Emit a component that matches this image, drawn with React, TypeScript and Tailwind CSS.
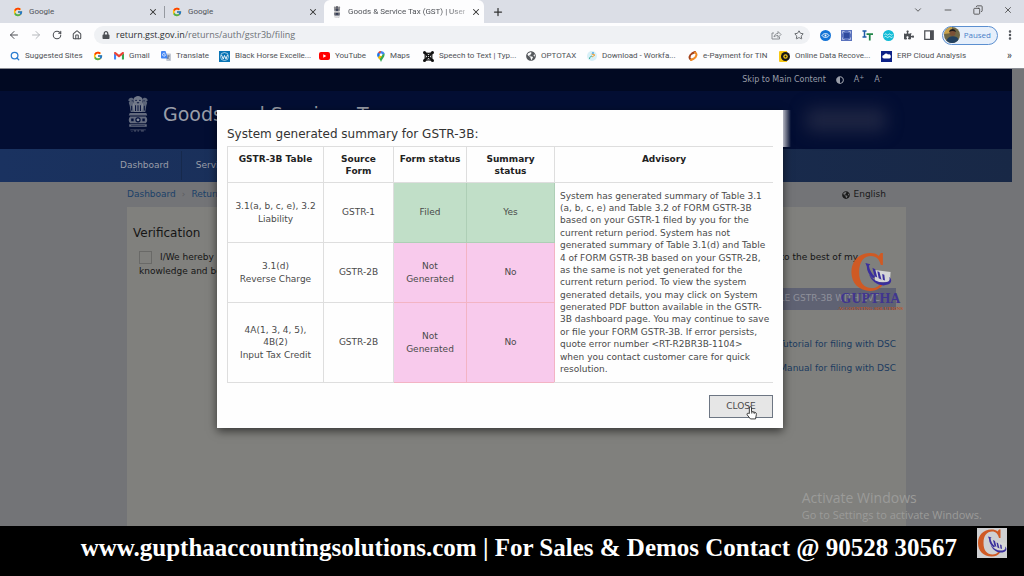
import React from "react";
import {
  ArrowLeft,
  ArrowRight,
  ChevronDown,
  Copy,
  EllipsisVertical,
  House,
  Minus,
  Plus,
  RotateCw,
  Search,
  Star,
  X,
} from "lucide-react";
import { FcGoogle } from "react-icons/fc";
import { FaAdjust, FaGlobeAmericas, FaLock, FaPuzzlePiece } from "react-icons/fa";

const rows = [
  {
    table: ["3.1(a, b, c, e), 3.2", "Liability"],
    source: "GSTR-1",
    form: "Filed",
    summary: "Yes",
    ok: true,
    height: "h-[60px]",
  },
  {
    table: ["3.1(d)", "Reverse Charge"],
    source: "GSTR-2B",
    form: "Not Generated",
    summary: "No",
    ok: false,
    height: "h-[60px]",
  },
  {
    table: ["4A(1, 3, 4, 5),", "4B(2)", "Input Tax Credit"],
    source: "GSTR-2B",
    form: "Not Generated",
    summary: "No",
    ok: false,
    height: "h-[80px]",
  },
];

function GmailIcon() {
  return (
    <svg viewBox="0 0 24 18" className="w-2.5 shrink-0">
      <path d="M0 3v13.500c0 .8.700 1.500 1.500 1.500H5V7z" fill="#4285f4" />
      <path d="M24 3v13.500c0 .8-.7 1.500-1.500 1.500H19V7z" fill="#34a853" />
      <path d="M0 2.500C0 0 2.500-.8 4.500.8L12 6.500 19.500.8C21.500-.8 24 0 24 2.500L23 5 12 13 1 5z" fill="#ea4335" />
    </svg>
  );
}

function TranslateIcon() {
  return (
    <svg viewBox="0 0 20 20" className="w-2.5 shrink-0">
      <path d="M8 5h10.500c.8 0 1.500.7 1.500 1.500V18c0 1-.6 2-1.500 2H11z" fill="#c3c9d4" />
      <path d="M1.500 0H9l5 15H1.500C.7 15 0 14.300 0 13.500v-12C0 .7.700 0 1.500 0z" fill="#4285f4" />
      <path d="M9 7.500H6.500M8.500 5.600A3 3 0 1 0 9 8" stroke="#fff" strokeWidth="1.400" fill="none" />
      <path d="M12 10h6M15 8.500V10c0 3-1.500 5-3 6M13 12l4 5" stroke="#5f6b80" strokeWidth="1.200" fill="none" />
    </svg>
  );
}

function WordpressIcon() {
  return (
    <svg viewBox="0 0 22 22" className="w-[11px] shrink-0">
      <path d="M0 0h22v22H0z" fill="#0b75b5" />
      <circle cx="11" cy="11" r="8" fill="none" stroke="#fff" strokeWidth="1.200" />
      <path d="M5 8l3.500 8L11 9l3 7 3-8" fill="none" stroke="#fff" strokeWidth="1.800" />
    </svg>
  );
}

function YoutubeIcon() {
  return (
    <svg viewBox="0 0 22 16" className="w-[11px] shrink-0">
      <rect width="22" height="16" rx="4" fill="#f00" />
      <path d="M8.500 4.500v7l6-3.500z" fill="#fff" />
    </svg>
  );
}

function MapsIcon() {
  return (
    <svg viewBox="0 0 16 22" className="h-[11px] shrink-0">
      <path d="M8 0a8 8 0 0 0-6 2.800L8 8z" fill="#ea4335" />
      <path d="M8 0a8 8 0 0 1 7.500 5L9 9 6 6z" fill="#4285f4" />
      <path d="M2 2.800C-.6 6-.3 10 2 13l6-6z" fill="#1a73e8" />
      <path d="M2 13L14.800 5C17 11 10 15 8 22c-1-4-3.500-6-6-9z" fill="#34a853" />
      <path d="M2 13l5-6 3 3-5 7z" fill="#fbbc04" />
      <circle cx="8" cy="7.500" r="2.700" fill="#fff" />
    </svg>
  );
}

function KnotIcon() {
  return (
    <svg viewBox="0 0 22 22" className="w-[11px] shrink-0">
      <g fill="none" stroke="#111">
        <path d="M3 3l16 16M19 3L3 19" strokeWidth="4" />
        <path d="M3 3c3 2 13 2 16 0-2 3-2 13 0 16-3-2-13-2-16 0 2-3 2-13 0-16z" strokeWidth="2.500" />
      </g>
      <circle cx="11" cy="11" r="1" fill="#fff" />
      <g fill="#111">
        <circle cx="3" cy="3" r="3" />
        <circle cx="19" cy="3" r="3" />
        <circle cx="3" cy="19" r="3" />
        <circle cx="19" cy="19" r="3" />
      </g>
    </svg>
  );
}

function WorkfaIcon() {
  return (
    <svg viewBox="0 0 20 20" className="w-2.5 shrink-0">
      <circle cx="10" cy="10" r="10" fill="#d8f0f7" />
      <path d="M5 16c0-4 2-5 5-6" stroke="#3fae9a" strokeWidth="2" fill="none" />
      <path d="M9 6l7 2-6 4" stroke="#f0a23a" strokeWidth="2" fill="none" />
      <circle cx="12" cy="4" r="1.800" fill="#4aa3df" />
    </svg>
  );
}

function TinIcon() {
  return (
    <svg viewBox="0 0 20 20" className="w-2.5 shrink-0">
      <path d="M6 17C1 15 3 8 8 5l6-3" fill="none" stroke="#a4441c" strokeWidth="4" strokeLinecap="round" />
      <path d="M14 3c5 2 3 9-2 12l-6 3" fill="none" stroke="#f08a24" strokeWidth="4" strokeLinecap="round" />
    </svg>
  );
}

function DiscIcon() {
  return (
    <svg viewBox="0 0 22 22" className="w-[11px] shrink-0">
      <path d="M2 0h14v22H2a2 2 0 0 1-2-2V2a2 2 0 0 1 2-2z" fill="#f7c815" />
      <circle cx="13" cy="11" r="9" fill="#161616" />
      <circle cx="13" cy="11" r="4.500" fill="#f7c815" />
      <circle cx="13" cy="11" r="2" fill="#161616" />
    </svg>
  );
}

function CloudIcon() {
  return (
    <svg viewBox="0 0 22 22" className="w-[11px] shrink-0">
      <path d="M0 0h22v22H0z" fill="#0d2187" />
      <path d="M6 15a3.500 3.500 0 0 1 0-7 4.500 4.500 0 0 1 8-1 4 4 0 0 1 3 8z" fill="#fff" />
    </svg>
  );
}

const bookmarks = [
  { label: "Suggested Sites", icon: <Search className="size-2.5 text-[#2b7cd0]" strokeWidth={3} />, width: "w-[83px]" },
  { label: "", icon: <FcGoogle className="size-2.5" />, width: "w-[21px]" },
  { label: "Gmail", icon: <GmailIcon />, width: "w-[47px]" },
  { label: "Translate", icon: <TranslateIcon />, width: "w-[58px]" },
  { label: "Black Horse Excelle...", icon: <WordpressIcon />, width: "w-[100px]" },
  { label: "YouTube", icon: <YoutubeIcon />, width: "w-[58px]" },
  { label: "Maps", icon: <MapsIcon />, width: "w-[46px]" },
  { label: "Speech to Text | Typ...", icon: <KnotIcon />, width: "w-[103px]" },
  { label: "OPTOTAX", icon: <FaGlobeAmericas className="size-2.5 text-[#55585c]" />, width: "w-[61px]" },
  { label: "Download - Workfa...", icon: <WorkfaIcon />, width: "w-[101px]" },
  { label: "e-Payment for TIN", icon: <TinIcon />, width: "w-[91px]" },
  { label: "Online Data Recove...", icon: <DiscIcon />, width: "w-[102px]" },
  { label: "ERP Cloud Analysis", icon: <CloudIcon />, width: "w-[90px]" },
];

function Emblem({ className }: { className: string }) {
  return (
    <svg viewBox="0 0 44 74" className={className} fill="currentColor">
      <path d="M16 2c4-2.500 8-2.500 12 0 3 2 4 5 3 9l2 9-3 13H14l-3-13 2-9c-1-4 0-7 3-9z" opacity=".85" />
      <path d="M3 6c4-4 9-2 10 1l-1 6 3 8-1 12H7L5 20 3 14l2-3-3-1zM41 6c-4-4-9-2-10 1l1 6-3 8 1 12h7l2-13 2-6-2-3 3-1z" opacity=".7" />
      <path d="M5 35h34l2 5H3zM6 42h32c4 4 4 10 0 14H6c-4-4-4-10 0-14zM4 58h36v5H4z" opacity=".75" />
      <g fill="#04103a">
        <circle cx="18" cy="9" r="1.500" />
        <circle cx="26" cy="9" r="1.500" />
        <path d="M19 13h6l-3 3zM16 19h2v12h-2zM21 19h2v12h-2zM26 19h2v12h-2zM9 9h3v2H9zM33 9h3v2h-3zM8 20h2v10H8zM34 20h2v10h-2z" />
        <circle cx="22" cy="49" r="5.500" />
        <path d="M8 46h5v6H8zM31 46h5v6h-5zM8 60h28v1H8z" />
      </g>
      <circle cx="22" cy="49" r="3" />
      <path d="M6 69h32v1.500H6zM8 72h3v1H8zM14 71h4v2h-4zM21 71h3v2h-3zM28 71h6v2h-6z" opacity=".6" />
    </svg>
  );
}

// Serif-style C ring with falling bars and a swoosh inside
function GupthaMark({ className }: { className: string }) {
  return (
    <svg viewBox="0 0 60 60" className={className}>
      <path
        d="M44 20h3V3h-3l-3 4C38 4 34 3 29 3 13 3 2 14 2 30s11 27 27 27c8 0 14-3 18-9l-3-2c-3 5-8 7-13 7-11 0-18-8-18-23S20 7 30 7c8 0 12 5 14 13z"
        className="fill-[#cf5a24]"
      />
      <path d="M35 27l23 3-1 14-21 1z" className="fill-[#d4d5d6]" />
      <path d="M22 17l7 2-2 2c1 6 4 12 9 16l-3 2c-6-5-9-11-9-17z" fill="#3a2f9c" />
      <path d="M32 24l4 2 3 12-4-2zM39 29l3 1 3 11-4-2zM46 33l3 1 1 8-3-1z" fill="#3a2f9c" />
      <path d="M27 33c7 11 18 14 27 11 3-2 3-4 2-7 5 4 3 9-2 11-11 4-23-3-27-15z" fill="#3a2f9c" />
    </svg>
  );
}

function TabStrip() {
  return (
    <div className="flex h-[23px] items-stretch bg-[#dbdee6] pl-1.5">
      {[0, 1].map((n) => (
        <div key={n} className={`flex w-[159px] items-center gap-1.5 pl-[7px] ${n === 0 ? "" : "pr-1.5"}`}>
          <FcGoogle className="size-2.5" />
          <span className="flex-1">Google</span>
          <button aria-label="Close tab">
            <X className="size-2.5 text-[#333]" strokeWidth={2.5} />
          </button>
          {n === 0 && <span className="h-3 w-px bg-[#9599a0]" />}
        </div>
      ))}
      <div className="flex w-[160px] items-center gap-1.5 rounded-t-md bg-[#fdfdfe] px-2">
        <Emblem className="h-3 w-2.5 shrink-0 text-[#5c5c60]" />
        <span className="flex-1 whitespace-nowrap [mask-image:linear-gradient(to_right,black_85%,#0006)]">
          Goods &amp; Service Tax (GST) | User
        </span>
        <button aria-label="Close tab">
          <X className="size-2.5 text-[#333]" strokeWidth={2.5} />
        </button>
      </div>
      <button aria-label="New tab" className="px-2">
        <Plus className="size-3 text-[#333]" strokeWidth={2.5} />
      </button>
      <div className="ml-auto flex items-center gap-5 pb-1 pr-[11px] text-[#444]">
        <ChevronDown className="size-2.5" />
        <Minus className="size-2.5" />
        <Copy className="size-2.5 -scale-x-100" />
        <X className="size-2.5" />
      </div>
    </div>
  );
}

function Toolbar() {
  return (
    <div className="flex h-6 items-center bg-[#fdfdfe] pl-2 pr-2 text-[#4c4f54]">
      <div className="flex w-[86px] items-center gap-2.5">
        <button aria-label="Back"><ArrowLeft className="size-3" /></button>
        <button aria-label="Forward" className="text-[#b5b8bc]"><ArrowRight className="size-3" /></button>
        <button aria-label="Reload"><RotateCw className="size-2.5" strokeWidth={2.5} /></button>
        <button aria-label="Home"><House className="size-2.5" strokeWidth={2.5} /></button>
      </div>
      <div className="flex h-[18px] flex-1 items-center gap-1.5 rounded-full bg-[#eff1f4] pl-2 pr-1.5">
        <FaLock className="size-2" />
        <span className="flex-1 font-['Open_Sans',sans-serif] text-[9px] text-[#6c7075]">
          <span className="text-[#2c2e31]">return.gst.gov.in</span>/returns/auth/gstr3b/filing
        </span>
        <svg viewBox="0 0 22 20" className="mr-1.5 w-[11px]" fill="none" stroke="#808489" strokeWidth="1.800">
          <path d="M6 6H2v12h15v-4" />
          <path d="M6 14c1-5 4-7 8-7V3l6 6-6 6v-4c-4 0-6 1-8 3z" />
        </svg>
        <Star className="size-2.5" />
      </div>
      <div className="flex items-center gap-2.5 pl-2.5">
        <svg viewBox="0 0 22 22" className="w-[11px]">
          <circle cx="11" cy="11" r="11" fill="#1473d6" />
          <path d="M4 11c3-5 11-5 14 0-3 5-11 5-14 0z" fill="none" stroke="#fff" strokeWidth="2" />
          <circle cx="11" cy="11" r="2" fill="#fff" />
        </svg>
        <svg viewBox="0 0 22 22" className="w-[11px]">
          <path d="M0 0h22v22H0z" fill="#5a72bd" />
          <path d="M6 6h11v10H6z" fill="#2f4a9e" />
          <path d="M3 7V3h4M15 3h4v4M19 15v4h-4M7 19H3v-4" stroke="#c8d2ee" strokeWidth="1.500" fill="none" />
        </svg>
        <svg viewBox="0 0 22 22" className="w-[11px]" fill="none">
          <path d="M1 2h8M1 14h8M5 2v12" stroke="#1d5ba8" strokeWidth="3" />
          <path d="M9 8h13M15.500 8v13" stroke="#22864a" strokeWidth="3.500" />
        </svg>
        <svg viewBox="0 0 22 22" className="w-[11px]">
          <circle cx="11" cy="11" r="11" fill="#12bcd6" />
          <path d="M3 9c4-4 5 4 8 0s5 4 8 0M3 14c4-4 5 4 8 0s5 4 8 0" fill="none" stroke="#d6f7fb" strokeWidth="2" />
        </svg>
        <FaPuzzlePiece className="size-2.5" />
        <svg viewBox="0 0 20 20" className="w-2.5">
          <path d="M1.500 1.500h17v17h-17z" fill="none" stroke="#4c4f54" strokeWidth="2.500" />
          <path d="M12 2h6v16h-6z" fill="#4c4f54" />
        </svg>
      </div>
      <button className="ml-2 flex h-[19px] items-center gap-1 rounded-full border border-[#5b8fd0] bg-[#e6effb] pl-px pr-1.5 font-['Open_Sans',sans-serif] text-[#4a80c8]">
        <svg viewBox="0 0 32 32" className="size-4">
          <circle cx="16" cy="16" r="16" fill="#6f6846" />
          <path d="M0 14A16 16 0 0 1 16 0v12z" fill="#caa34b" />
          <circle cx="17" cy="12" r="6" fill="#7b5136" />
          <path d="M10 10c1-8 13-8 14 0-5-3-9-3-14 0z" fill="#1c1a1c" />
          <path d="M5 27c3-11 21-11 24-2-6 9-18 9-24 2z" fill="#23415f" />
        </svg>
        Paused
      </button>
      <button aria-label="Menu" className="ml-auto pl-1.5">
        <EllipsisVertical className="size-3" strokeWidth={3} />
      </button>
    </div>
  );
}

function Bookmarks() {
  return (
    <nav className="flex h-[21px] items-center bg-[#fdfdfe] pb-[3px] pl-2.5 text-[#4f5256]">
      {bookmarks.map((b) => (
        <a key={b.label} href="#" aria-label={b.label || "Google"} className={`flex items-center gap-[5px] whitespace-nowrap ${b.width}`}>
          {b.icon}
          {b.label}
        </a>
      ))}
      <span className="ml-auto pr-3 text-[10px] font-semibold leading-none">»</span>
    </nav>
  );
}

function PortalHeader() {
  return (
    <header className="mr-3 text-[#999da8]">
      <div className="flex h-[22px] items-center justify-end gap-2.5 bg-[#010922] pr-[130px] text-[8px]">
        <a href="#main">Skip to Main Content</a>
        <FaAdjust className="size-2" />
        <button>A<sup>+</sup></button>
        <button>A<sup>-</sup></button>
      </div>
      <div className="flex h-[58px] items-center justify-between bg-[#030e33] pl-[127px] pr-[126px]">
        <div className="flex items-center gap-3.5 pb-3">
          <Emblem className="h-9 w-[22px] text-[#858b98]" />
          <h1 className="text-[19px] leading-none">Goods and Services Tax</h1>
        </div>
        <div className="h-6 w-[80px] rounded-md bg-[#1d2442] blur-sm" />
      </div>
      <nav className="flex h-[33px] items-center bg-linear-to-r from-[#1a3260] to-[#182846] pl-[120px]">
        <a href="#" className="border-r border-[#16294c] py-2 pr-3">Dashboard</a>
        <a href="#" className="px-3.5">Services</a>
      </nav>
    </header>
  );
}

function SummaryDialog() {
  return (
    <div
      role="dialog"
      aria-labelledby="summary-title"
      className="relative w-[566px] bg-[#fefefe] px-2.5 pb-2.5 pt-4 text-[#4a4a4a] shadow-[0_3px_9px_rgba(0,0,0,0.6)]"
    >
      <div className="absolute left-full top-0 h-[37px] w-2 bg-linear-to-r from-[#b4b6c2] to-transparent" />
      <h2 id="summary-title" className="pb-1 text-[12px] leading-4 text-[#333]">
        System generated summary for GSTR-3B:
      </h2>
      <table className="w-full table-fixed border-collapse border border-r-0 border-[#dedede] text-center leading-snug">
        <thead>
          <tr className="h-9 align-top text-[#222]">
            <th className="w-24 border border-[#dedede] px-1 pt-1.5">GSTR-3B Table</th>
            <th className="w-[70px] border border-[#dedede] px-3 pt-1.5">Source Form</th>
            <th className="w-[73px] border border-[#dedede] pt-1.5">Form status</th>
            <th className="w-[88px] border border-[#dedede] px-4 pt-1.5">Summary status</th>
            <th className="border-y border-[#dedede] pt-1.5">Advisory</th>
          </tr>
        </thead>
        <tbody>
          {rows.map((row, i) => (
            <tr key={row.table[0]} className={row.height}>
              <td className="border border-[#dedede]">
                {row.table.map((line) => (
                  <div key={line}>{line}</div>
                ))}
              </td>
              <td className="border border-[#dedede]">{row.source}</td>
              <td className={`border px-2 ${row.ok ? "border-[#aecfb6] bg-[#c1dfc8]" : "border-[#f3b4c4] bg-[#f8caec]"}`}>
                {row.form}
              </td>
              <td className={`border px-2 ${row.ok ? "border-[#aecfb6] bg-[#c1dfc8]" : "border-[#f3b4c4] bg-[#f8caec]"}`}>
                {row.summary}
              </td>
              {i === 0 && (
                <td rowSpan={3} className="border-y border-[#dedede] pl-[5px] text-left">
                  System has generated summary of Table 3.1 (a, b, c, e) and Table 3.2 of FORM GSTR-3B
                  based on your GSTR-1 filed by you for the current return period. System has not
                  generated summary of Table 3.1(d) and Table 4 of FORM GSTR-3B based on your GSTR-2B,
                  as the same is not yet generated for the current return period. To view the system
                  generated details, you may click on System generated PDF button available in the
                  GSTR-3B dashboard page. You may continue to save or file your FORM GSTR-3B. If error
                  persists, quote error number &lt;RT-R2BR3B-1104&gt;
                  <br />
                  when you contact customer care for quick resolution.
                </td>
              )}
            </tr>
          ))}
        </tbody>
      </table>
      <div className="flex justify-end pt-3">
        <button className="h-[23px] w-16 border border-[#6d7683] bg-[#e6e6e6]">CLOSE</button>
      </div>
      <svg viewBox="0 0 20 26" className="absolute bottom-2 right-[26px] h-[14px] w-[11px]">
        <path
          d="M6 14V3.500a2 2 0 0 1 4 0V10l7 2c2 .5 2.500 2 2 4l-1.500 8H8L2 16.500c-1.500-2.500 1-4 4-2.500z"
          fill="#fff"
          stroke="#222"
          strokeWidth="1.600"
        />
        <path d="M10 10v4M13 11v3M16 12v3" stroke="#222" strokeWidth="1.200" />
      </svg>
    </div>
  );
}

export default function App() {
  return (
    <div className="flex min-h-screen flex-col bg-black">
      <div className="border-b border-[#8b8d94] font-[Roboto,sans-serif] text-[8px] text-[#505358]">
        <TabStrip />
        <Toolbar />
        <Bookmarks />
      </div>

      <div className="relative flex flex-1 flex-col bg-[#737477] font-['DejaVu_Sans',sans-serif] text-[9px]">
        <PortalHeader />
        <main id="main" className="flex flex-1 flex-col pl-[127px] pr-[118px]">
          <div className="flex h-[25px] items-center justify-between pr-5">
            <div className="flex items-center gap-1.5 text-[#1b4169]">
              <a href="#">Dashboard</a>
              <span className="text-[#5c5d60]">›</span>
              <a href="#">Returns</a>
            </div>
            <span className="flex items-center gap-1 text-[#1a1a1a]">
              <FaGlobeAmericas className="size-2" />
              English
            </span>
          </div>

          <div className="flex-1 bg-[#80807d] px-1.5 pt-[18px] text-[#151515]">
            <h2 className="text-[12px] leading-4">Verification</h2>
            <div className="px-1.5 pt-2.5">
              <div className="flex items-center justify-between pr-9">
                <label className="flex items-center gap-2">
                  <input type="checkbox" className="size-[13px] appearance-none border border-[#696967]" />
                  I/We hereby
                </label>
                <span>to the best of my</span>
              </div>
              <p>knowledge and belief</p>
            </div>
            <div className="flex flex-col items-end pr-1 pt-2.5">
              <button className="h-[22px] bg-[#5f6273] px-4 text-[#8f919b]">FILE GSTR-3B WITH EVC</button>
              <a href="#" className="pt-7 leading-3 text-[#1b3b60]">Tutorial for filing with DSC</a>
              <a href="#" className="pt-3 leading-3 text-[#1b3b60]">Manual for filing with DSC</a>
            </div>
          </div>
        </main>

        <div className="absolute right-[124px] top-[182px] flex w-[59px] flex-col items-center font-['Liberation_Serif',serif] font-bold">
          <GupthaMark className="size-[42px]" />
          <span className="text-[14px] leading-3 text-[#40358f]">GUPTHA</span>
          <span className="whitespace-nowrap text-[5px] leading-[7px] text-[#bd5224]">ACCOUNTING SOLUTIONS</span>
        </div>

        <div className="absolute bottom-1 right-[42px] font-['Open_Sans',sans-serif] text-[#9b9b99]">
          <div className="text-[14px] leading-5">Activate Windows</div>
          <div className="text-[11px] leading-[14px]">Go to Settings to activate Windows.</div>
        </div>

        <div className="absolute inset-x-0 top-[41px] flex justify-center pr-6">
          <SummaryDialog />
        </div>
      </div>

      <footer className="flex h-[50px] items-start justify-end gap-5 rounded-md bg-black pr-[17px] pt-0.5 font-['Liberation_Serif',serif] text-[25px] font-bold text-white">
        <p className="whitespace-nowrap leading-10">
          www.gupthaaccountingsolutions.com | For Sales &amp; Demos Contact @ 90528 30567
        </p>
        <div className="bg-[#cfd0d2]">
          <GupthaMark className="size-[30px]" />
        </div>
      </footer>
    </div>
  );
}
